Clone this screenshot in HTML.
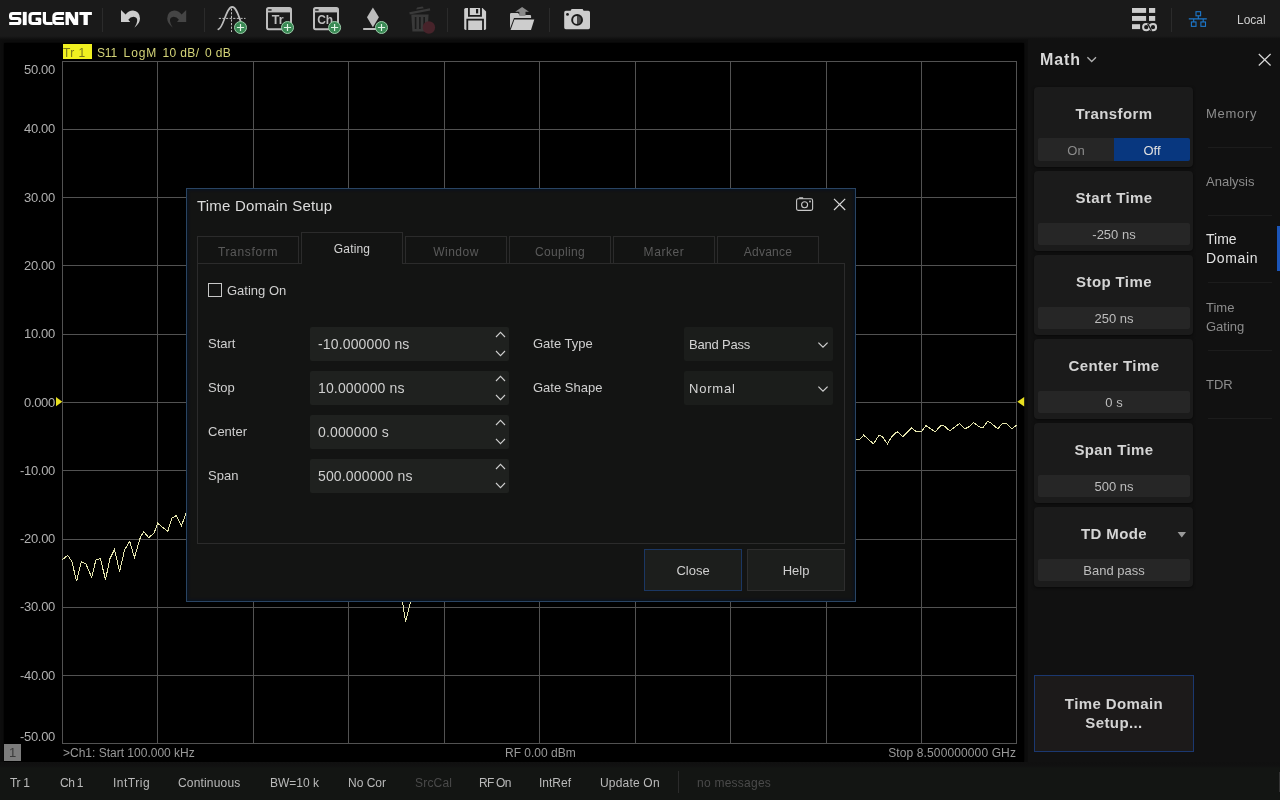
<!DOCTYPE html>
<html>
<head>
<meta charset="utf-8">
<title>Time Domain Setup</title>
<style>
*{box-sizing:border-box;margin:0;padding:0}
html,body{width:1280px;height:800px;overflow:hidden;background:#0d0d0d;font-family:"Liberation Sans",sans-serif;font-size:13px;color:#cfcfcf}
.a{position:absolute}
.t{position:absolute;white-space:nowrap;line-height:1}
#toolbar{left:0;top:0;width:1280px;height:40px;background:linear-gradient(#1a1a1a 0,#1a1a1a 36px,#101010 39px,#0d0d0d 40px)}
#plotbg{left:4px;top:43px;width:1020px;height:719px;background:#000;box-shadow:0 0 2px #000}
#rpanel{left:1028px;top:39px;width:252px;height:728px;background:#111111}
#status{left:0;top:762px;width:1280px;height:38px;background:linear-gradient(#101010 0,#111 4px,#131513 6px,#131513 100%)}
.vdiv{position:absolute;width:1px;background:#2b2b2b;top:8px;height:24px}
.ylab{position:absolute;white-space:nowrap;line-height:1;font-size:13px;color:#b0b0b0;width:55px;left:0;text-align:right;letter-spacing:-.3px}
.card{position:absolute;left:1034px;width:159px;height:80px;background:#1b1b1b;border-radius:4px;box-shadow:0 1px 3px rgba(0,0,0,.6)}
.card .ti{position:absolute;left:0;width:160px;text-align:center;top:19px;font-size:15px;font-weight:bold;color:#d4d4d4;line-height:1;letter-spacing:.4px}
.card .val{position:absolute;left:4px;top:52px;width:152px;height:22px;padding-top:1px;background:#262626;border-radius:2px;text-align:center;font-size:13px;line-height:21px;color:#bdbdbd}
.stab{position:absolute;left:1206px;font-size:13px;color:#8c8c8c;line-height:18px;white-space:nowrap}
.ssep{position:absolute;left:1208px;width:64px;height:1px;background:#1c1c1c}
.sb{position:absolute;white-space:nowrap;line-height:1;top:777px;font-size:12px;color:#bababa}
#dlg{left:186px;top:188px;width:670px;height:414px;background:#131413;border:1px solid #294463;box-shadow:inset 0 0 3px 1px rgba(0,18,40,.75)}
.tab{position:absolute;top:236px;width:102px;height:28px;border:1px solid #2b2b2b;background:#131413;text-align:center;font-size:12px;color:#5a5a5a;line-height:31px}
.lab{position:absolute;white-space:nowrap;line-height:1;font-size:13px;color:#cfcfcf}
.inp{position:absolute;left:310px;width:199px;height:34px;background:#1f211f;border-radius:2px}
.inp span{position:absolute;left:8px;top:10px;font-size:14px;line-height:1;color:#cfcfcf;white-space:nowrap;letter-spacing:.15px}
.sel{position:absolute;left:684px;width:149px;height:34px;background:#1b1d1b;border-radius:2px}
.sel span{position:absolute;left:5px;top:10.5px;font-size:13px;line-height:1;color:#d4d4d4;white-space:nowrap}
.btn{position:absolute;top:549px;width:98px;height:42px;background:#1c1e1c;border:1px solid #2e2e2e;text-align:center;font-size:13px;line-height:41px;color:#cfcfcf}
</style>
</head>
<body>
<div id="root" style="position:absolute;left:0;top:0;width:1280px;height:800px;will-change:transform;transform:translateZ(0)">
<div class="a" id="toolbar"></div>
<div class="a" id="plotbg"></div>
<div class="a" id="rpanel"></div>
<div class="a" id="status"></div>
<!--TOOLBAR-->
<svg class="a" id="logo" style="left:0;top:0" width="100" height="39" viewBox="0 0 100 39">
<g fill="none" stroke="#fff" stroke-width="3.2" stroke-linejoin="round">
<path d="M21.3 13.5H12.6Q10.6 13.5 10.6 15.3V16.7Q10.6 18.5 12.6 18.5H17.8Q19.8 18.5 19.8 20.3V21.7Q19.8 23.5 17.8 23.5H9.2"/>
<path d="M41.2 13.5H33Q30 13.5 30 16.3V20.7Q30 23.5 33 23.5H39.7V19.2H35.6"/>
<path d="M44.4 11.9V21Q44.4 23.5 47 23.5H52.6"/>
<path d="M64.1 13.5H57.4Q53.9 13.5 53.9 16.6V20.4Q53.9 23.5 57.4 23.5H64.1M54.4 18.5H63.4"/>
</g>
<g fill="#fff">
<rect x="22.8" y="11.9" width="3.9" height="13.2"/>
<path d="M65.5 11.9H70.2L74.8 19.6V11.9H78.2V25.1H73.5L68.9 17.4V25.1H65.5Z"/>
<path d="M79.4 11.9H91.9V15.1H87.8V25.1H83.5V15.1H79.4Z"/>
</g>
</svg>
<div class="vdiv" style="left:102px"></div>
<div class="vdiv" style="left:204px"></div>
<div class="vdiv" style="left:447px"></div>
<div class="vdiv" style="left:549px"></div>
<div class="vdiv" style="left:1171px"></div>
<svg class="a" style="left:0;top:0" width="1280" height="40" viewBox="0 0 1280 40">
<!-- undo -->
<path id="undo" fill="#cdcdcd" d="M121 10.1L121 22L130.2 22L128.3 19.7Q130.2 16.8 133.6 16.8Q137.6 17.2 137.2 21Q136.8 24.6 134.4 27.8Q139.9 23.4 140 18.6Q139.6 11 133 10.6Q128.6 10.6 125.6 14.4Z"/>
<!-- redo -->
<path fill="#454545" transform="translate(307.2 0) scale(-1 1)" d="M121 10.1L121 22L130.2 22L128.3 19.7Q130.2 16.8 133.6 16.8Q137.6 17.2 137.2 21Q136.8 24.6 134.4 27.8Q139.9 23.4 140 18.6Q139.6 11 133 10.6Q128.6 10.6 125.6 14.4Z"/>
<!-- marker add -->
<g fill="none" stroke="#bdbdbd">
<path stroke-width="1.7" stroke-linecap="round" d="M218.3 29.4C223.5 28.5 226 7 232.2 6.9C237.5 7 239 20 243.5 28"/>
<path stroke-width="1" stroke-dasharray="2.2 1.4" d="M218.8 18.4H245.5M231.5 8.6V32"/>
</g>
<g id="plus1"><circle cx="240.5" cy="27.5" r="6" fill="#3a8a55" stroke="#9ccdaa" stroke-width="1"/><path d="M236.9 27.5H244.1M240.5 23.9V31.1" stroke="#e2f4e6" stroke-width="1.15" fill="none"/></g>
<!-- Tr window -->
<rect x="267" y="8" width="24" height="21.2" rx="1.6" fill="#1a1a1a" stroke="#bdbdbd" stroke-width="2"/>
<rect x="267" y="8" width="24" height="4.4" fill="#bdbdbd"/>
<rect x="268.2" y="9.2" width="3.4" height="1.5" fill="#222"/>
<text x="271.8" y="23.9" font-family="Liberation Sans" font-weight="bold" font-size="12.5" fill="#bdbdbd">Tr</text>
<g><circle cx="287.5" cy="27.5" r="6" fill="#3a8a55" stroke="#9ccdaa" stroke-width="1"/><path d="M283.9 27.5H291.1M287.5 23.9V31.1" stroke="#e2f4e6" stroke-width="1.15" fill="none"/></g>
<!-- Ch window -->
<rect x="314" y="8" width="24" height="21.2" rx="1.6" fill="#1a1a1a" stroke="#bdbdbd" stroke-width="2"/>
<rect x="314" y="8" width="24" height="4.4" fill="#bdbdbd"/>
<rect x="315.2" y="9.2" width="3.4" height="1.5" fill="#222"/>
<text x="317.2" y="23.5" font-family="Liberation Sans" font-weight="bold" font-size="12" fill="#bdbdbd">Ch</text>
<g><circle cx="334.6" cy="27.5" r="6" fill="#3a8a55" stroke="#9ccdaa" stroke-width="1"/><path d="M331 27.5H338.2M334.6 23.9V31.1" stroke="#e2f4e6" stroke-width="1.15" fill="none"/></g>
<!-- diamond -->
<path d="M372.9 7.6L378.9 17.2L372.9 27.3L367 17.2Z" fill="#bdbdbd"/>
<rect x="363.2" y="28" width="13" height="2" fill="#bdbdbd"/>
<g><circle cx="381.5" cy="27.5" r="6" fill="#3a8a55" stroke="#9ccdaa" stroke-width="1"/><path d="M377.9 27.5H385.1M381.5 23.9V31.1" stroke="#e2f4e6" stroke-width="1.15" fill="none"/></g>
<!-- trash (disabled) -->
<g fill="#393939">
<path d="M409.3 12.2L429.9 8.2L430.3 10.4L409.7 14.4Z"/>
<path d="M416.2 9.6L417 7.6L422.6 6.5L423.8 8.2Z"/>
<path d="M411.3 14.6H428.6L427.6 31.4H412.4Z"/>
</g>
<path d="M415.6 17V29M419.9 17V29M424.2 17V29" stroke="#1a1a1a" stroke-width="1.6" fill="none"/>
<circle cx="428.9" cy="27.5" r="6.2" fill="#47232a"/>
<!-- save -->
<path fill="#cdcdcd" d="M465.7 7.9H482.5L486.1 11.5V28.6Q486.1 30 484.7 30H465.7Q464.2 30 464.2 28.6V9.4Q464.2 7.9 465.7 7.9Z"/>
<path fill="none" stroke="#1a1a1a" stroke-width="1.8" d="M468.9 7.5V15.9H481V7.5M467.3 30.5V19.6H483V30.5"/>
<rect x="476" y="9" width="2.2" height="4.4" fill="#1a1a1a"/>
<!-- open -->
<path fill="#c4c4c4" d="M510 14.2Q510 12.9 511.3 12.9H518L519.8 15H530Q531.1 15 531.1 16.2V18H514L510 28.5Z"/>
<path fill="#cdcdcd" d="M514.4 19.6H534.3L531 30H510.6Z"/>
<path fill="#8a8a8a" d="M522.1 6.9L529 11.8H525.5V16H519.3V11.8H515.2Z"/>
<!-- camera -->
<path fill="#cdcdcd" d="M565.8 10.8H570.6L571.6 9H582.6L583.6 10.8H588.4Q590 10.8 590 12.4V27.6Q590 29.2 588.4 29.2H565.8Q564.2 29.2 564.2 27.6V12.4Q564.2 10.8 565.8 10.8Z"/>
<circle cx="577.1" cy="19.9" r="5.9" fill="#1a1a1a"/>
<path d="M577.1 15.9A4 4 0 0 0 577.1 23.9Z" fill="#cdcdcd"/>
<path d="M577.1 15.9A4 4 0 0 1 577.1 23.9Z" fill="#4a4a4a"/>
<circle cx="567.5" cy="14.4" r="1.4" fill="#1a1a1a"/>
<!-- list icon -->
<g fill="#cdcdcd">
<rect x="1132" y="8" width="14.1" height="4.9"/><rect x="1149" y="8" width="6.2" height="4.9"/>
<rect x="1132" y="16" width="14.1" height="4.9"/><rect x="1149" y="16" width="6.2" height="4.9"/>
<rect x="1132" y="24.2" width="8.1" height="4.9"/>
</g>
<g fill="none" stroke="#cdcdcd" stroke-width="2">
<circle cx="1146.2" cy="27.2" r="3.1"/><circle cx="1153" cy="27.2" r="3.1"/>
</g>
<path d="M1147.6 23.6L1151.6 30.8" stroke="#1a1a1a" stroke-width="1.3" fill="none"/>
<!-- network -->
<g fill="none" stroke="#1d78cc" stroke-width="1.1">
<rect x="1196" y="11.7" width="4.6" height="4.1"/>
<rect x="1191.4" y="21.95" width="4.6" height="4.4"/>
<rect x="1200.9" y="21.95" width="4.6" height="4.4"/>
<path d="M1198.3 15.8V18.9M1188.8 18.9H1206.8M1193.7 18.9V21.9M1203.2 18.9V21.9"/>
</g>
</svg>
<div class="t" id="local" style="left:1237px;top:14px;font-size:12px;color:#cdcdcd">Local</div>
<!--/TOOLBAR-->
<!--PLOT-->
<svg class="a" style="left:0;top:0" width="1280" height="800" viewBox="0 0 1280 800" shape-rendering="crispEdges">
<g stroke="#525252" stroke-width="1" fill="none">
<path d="M62.5 61V744M157.5 61V744M253.5 61V744M348.5 61V744M444.5 61V744M539.5 61V744M635.5 61V744M730.5 61V744M826.5 61V744M921.5 61V744M1016.5 61V744"/>
<path d="M62 61.5H1017M62 129.5H1017M62 197.5H1017M62 265.5H1017M62 334.5H1017M62 402.5H1017M62 470.5H1017M62 539.5H1017M62 607.5H1017M62 675.5H1017M62 743.5H1017"/>
</g>
<g shape-rendering="crispEdges" fill="none" stroke="#e6e6ae" stroke-width="1">
<polyline points="62.5,559.6 67.6,555.3 71.8,561.3 76.6,581.2 81.4,561.6 85.9,563.9 91.7,577.6 95.8,560.2 100.3,558.5 105.5,579.6 110,558.5 114.5,549.5 119.6,571.4 124.7,549.5 129.7,541.4 134.4,557.6 140.4,537.1 143.8,531.8 148.8,537.7 154.2,532.8 157.6,523.1 167.7,531.5 171.9,518 176.4,515.5 181.5,525.6 185.7,514.1 190,520"/>
<polyline points="398,600 402.5,602 405.5,621.5 410.5,602 414,598"/>
<polyline points="852,441 855.9,439 859.6,439.4 863.6,435.1 873.5,443.8 878.8,435.5 882.1,436.2 887.4,443.8 892.2,436.1 897.25,431.6 902.9,436.8 911.5,427.8 916.4,431.6 921.4,431.6 925.9,425.7 935.2,431.8 941.1,425.2 944.2,425.9 949.8,430.9 959.4,423.5 965,428.75 969.25,426.6 973.5,422.4 978.7,426.6 982.9,427.6 987.5,421.4 990.6,422.8 997.7,428.75 1002.6,423.5 1006.4,423.5 1011.7,428.75 1016.6,425.2"/>
</g>
<g shape-rendering="geometricPrecision">
<path d="M56 397L62.3 401.7L56 406.3Z" fill="#e8e020"/>
<path d="M1024.2 397L1017.3 401.8L1024.2 406.4Z" fill="#e8e020"/>
</g>
</svg>
<div class="ylab" style="top:63px">50.00</div>
<div class="ylab" style="top:122px">40.00</div>
<div class="ylab" style="top:191px">30.00</div>
<div class="ylab" style="top:259px">20.00</div>
<div class="ylab" style="top:327px">10.00</div>
<div class="ylab" style="top:396px">0.000</div>
<div class="ylab" style="top:464px">-10.00</div>
<div class="ylab" style="top:532px">-20.00</div>
<div class="ylab" style="top:600px">-30.00</div>
<div class="ylab" style="top:669px">-40.00</div>
<div class="ylab" style="top:730px">-50.00</div>
<div class="a" style="left:63px;top:44px;width:29px;height:15px;background:#f0f020"></div>
<div class="t" id="tr1" style="letter-spacing:.4px;left:63px;top:47px;font-size:12px;color:#77771a">Tr 1</div>
<div class="t" id="s11" style="letter-spacing:-.2px;left:97px;top:47px;font-size:12px;color:#d4d478">S11</div>
<div class="t" id="logm" style="letter-spacing:.9px;left:123.6px;top:47px;font-size:12px;color:#d4d478">LogM</div>
<div class="t" id="tendb" style="letter-spacing:.34px;left:162.6px;top:47px;font-size:12px;color:#d4d478">10 dB/</div>
<div class="t" id="zdb" style="letter-spacing:.32px;left:205px;top:47px;font-size:12px;color:#d4d478">0 dB</div>
<div class="a" style="left:4px;top:744px;width:17px;height:17px;background:#7c7c7c"></div>
<div class="t" style="left:9px;top:746px;font-size:13px;color:#3a3a3a">1</div>
<div class="t" id="chstart" style="left:63px;top:747px;font-size:12px;color:#9a9a9a">&gt;Ch1: Start 100.000 kHz</div>
<div class="t" id="rfpow" style="left:505px;top:747px;font-size:12px;color:#9a9a9a">RF 0.00 dBm</div>
<div class="t" id="stopf" style="letter-spacing:.12px;right:264px;top:747px;font-size:12px;color:#9a9a9a">Stop 8.500000000 GHz</div>
<!--/PLOT-->
<!--RPANEL-->
<div class="t" id="math" style="left:1040px;top:52px;font-size:16px;font-weight:bold;color:#d8d8d8;letter-spacing:.9px">Math</div>
<div class="card" style="top:87px"><div class="ti">Transform</div>
<div class="a" style="left:4px;top:51px;width:76px;height:23px;padding-top:2px;background:#262626;border-radius:2px 0 0 2px;text-align:center;font-size:13px;line-height:21px;color:#8c8c8c">On</div>
<div class="a" style="left:80px;top:51px;width:76px;height:23px;padding-top:2px;background:#08377f;border-radius:0 2px 2px 0;text-align:center;font-size:13px;line-height:21px;color:#e0e0e0">Off</div>
</div>
<div class="card" style="top:171px"><div class="ti">Start Time</div><div class="val">-250 ns</div></div>
<div class="card" style="top:255px"><div class="ti">Stop Time</div><div class="val">250 ns</div></div>
<div class="card" style="top:339px"><div class="ti">Center Time</div><div class="val">0 s</div></div>
<div class="card" style="top:423px"><div class="ti">Span Time</div><div class="val">500 ns</div></div>
<div class="card" style="top:507px"><div class="ti">TD Mode</div><div class="val">Band pass</div></div>
<div class="a" id="tdsbtn" style="left:1034px;top:675px;width:160px;height:77px;background:#1c1a1a;border:1px solid #1b3870"></div>
<div class="t" style="left:1034px;width:160px;text-align:center;top:694px;font-size:15px;font-weight:bold;color:#d4d4d4;letter-spacing:.4px;line-height:19px;white-space:normal">Time Domain<br>Setup...</div>
<div class="stab" style="top:105px;letter-spacing:.7px">Memory</div>
<div class="ssep" style="top:147px"></div>
<div class="stab" style="top:173px">Analysis</div>
<div class="ssep" style="top:215px"></div>
<div class="stab" style="top:230px;font-size:14px;color:#e2e2e2;line-height:19px">Time<br><span style="letter-spacing:.65px">Domain</span></div>
<div class="a" style="left:1277px;top:226px;width:3px;height:45px;background:#1b55b8"></div>
<div class="ssep" style="top:282px"></div>
<div class="stab" style="top:299px">Time<br><span style="position:relative;top:1px">Gating</span></div>
<div class="ssep" style="top:350px"></div>
<div class="stab" style="top:376px">TDR</div>
<div class="ssep" style="top:418px"></div>
<svg class="a" style="left:1028px;top:39px" width="252" height="761" viewBox="1028 39 252 761" fill="none">
<path d="M1087.4 57.2L1091.7 61.5L1096 57.2" stroke="#b0b0b0" stroke-width="1.3"/>
<path d="M1258.8 54L1270.6 65.5M1270.6 54L1258.8 65.5" stroke="#d8d8d8" stroke-width="1.2"/>
<path d="M1177.6 532L1186 532L1181.8 537.4Z" fill="#9a9a9a"/>
</svg>
<!--/RPANEL-->
<!--STATUS-->
<div class="sb" style="left:10px;letter-spacing:-.35px">Tr 1</div>
<div class="sb" style="left:60px;word-spacing:-.5px;letter-spacing:-.5px">Ch 1</div>
<div class="sb" style="left:113px;letter-spacing:.5px">IntTrig</div>
<div class="sb" style="left:178px;letter-spacing:.17px">Continuous</div>
<div class="sb" style="left:270px">BW=10 k</div>
<div class="sb" style="left:348px">No Cor</div>
<div class="sb" style="left:415px;color:#4a4a4a;letter-spacing:.2px">SrcCal</div>
<div class="sb" style="left:479px;word-spacing:-.6px;letter-spacing:-.55px">RF On</div>
<div class="sb" style="left:539px">IntRef</div>
<div class="sb" style="left:600px;letter-spacing:.19px">Update On</div>
<div class="a" style="left:678px;top:771px;width:1px;height:22px;background:#2b2b2b"></div>
<div class="sb" style="left:697px;color:#4a4a4a;letter-spacing:.25px">no messages</div>
<div class="a" style="left:1279px;top:772px;width:1px;height:20px;background:#333"></div>
<!--/STATUS-->
<!--DIALOG-->
<div class="a" id="dlg"></div>
<div class="t" id="dtitle" style="left:197px;top:198px;font-size:15px;color:#dcdcdc;letter-spacing:.2px">Time Domain Setup</div>
<svg class="a" style="left:186px;top:188px" width="670" height="414" viewBox="186 188 670 414" fill="none">
<g stroke="#c8c8c8" stroke-width="1.1">
<rect x="796.6" y="198.8" width="16" height="11.6" rx="1.6"/>
<circle cx="804.6" cy="204.7" r="3"/>
</g>
<rect x="799" y="197.2" width="4.2" height="1.6" rx=".5" fill="#c8c8c8"/>
<circle cx="810" cy="201.5" r="0.9" fill="#c8c8c8"/>
<path d="M834 198.8L845.2 210M845.2 198.8L834 210" stroke="#d8d8d8" stroke-width="1.2"/>
</svg>
<div class="a" id="pane" style="left:197px;top:263px;width:648px;height:281px;border:1px solid #2b2b2b;background:#131413"></div>
<div class="tab" style="left:197px;letter-spacing:.66px">Transform</div>
<div class="tab" style="left:405px;letter-spacing:.5px">Window</div>
<div class="tab" style="left:509px;letter-spacing:.36px">Coupling</div>
<div class="tab" style="left:613px;letter-spacing:.6px">Marker</div>
<div class="tab" style="left:717px;letter-spacing:.25px">Advance</div>
<div class="tab" style="left:301px;top:232px;height:32px;border-bottom:none;color:#d4d4d4;letter-spacing:.15px;line-height:32px">Gating</div>
<div class="a" style="left:208px;top:283px;width:14px;height:14px;border:1px solid #c8c8c8;background:#131413"></div>
<div class="lab" id="gon" style="left:227px;top:284px">Gating On</div>
<div class="lab" style="left:208px;top:337px">Start</div>
<div class="lab" style="left:208px;top:381px">Stop</div>
<div class="lab" style="left:208px;top:425px">Center</div>
<div class="lab" style="left:208px;top:469px">Span</div>
<div class="inp" style="top:327px"><span>-10.000000 ns</span></div>
<div class="inp" style="top:371px"><span>10.000000 ns</span></div>
<div class="inp" style="top:415px"><span>0.000000 s</span></div>
<div class="inp" style="top:459px"><span>500.000000 ns</span></div>
<div class="lab" style="left:533px;top:337px">Gate Type</div>
<div class="lab" style="left:533px;top:381px">Gate Shape</div>
<div class="sel" style="top:327px"><span style="letter-spacing:-.2px">Band Pass</span></div>
<div class="sel" style="top:371px"><span style="letter-spacing:.8px">Normal</span></div>
<svg class="a" style="left:186px;top:188px" width="670" height="414" viewBox="186 188 670 414" fill="none">
<path stroke="#cfcfcf" stroke-width="1.2" d="M818.4 342.6L823 347.2L827.6 342.6M818.4 386.6L823 391.2L827.6 386.6"/>
<g stroke="#cfcfcf" stroke-width="1.1">
<path d="M496 337L500.5 332.4L505 337M496 351L500.5 355.6L505 351"/>
<path d="M496 381L500.5 376.4L505 381M496 395L500.5 399.6L505 395"/>
<path d="M496 425L500.5 420.4L505 425M496 439L500.5 443.6L505 439"/>
<path d="M496 469L500.5 464.4L505 469M496 483L500.5 487.6L505 483"/>
</g>
</svg>
<div class="btn" style="left:644px;border-color:#1b3763">Close</div>
<div class="btn" style="left:747px">Help</div>
<!--/DIALOG-->
</div>
</body>
</html>
